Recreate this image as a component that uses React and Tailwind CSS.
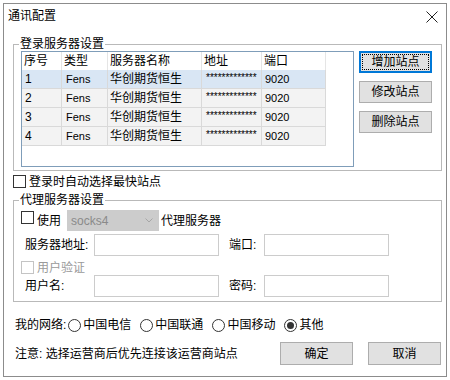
import { useState } from 'react'

const rows = [1, 2, 3, 4]

function Check({ disabled }) {
  return (
    <span
      className={`block w-[13px] h-[13px] border bg-white shrink-0 ${disabled ? 'border-[#c4c4c4]' : 'border-[#333333]'}`}
    />
  )
}

function Radio({ checked }) {
  return (
    <span className="flex items-center justify-center w-[13px] h-[13px] rounded-full border border-[#333333] bg-white shrink-0">
      {checked && <span className="block w-[7px] h-[7px] rounded-full bg-[#333333]" />}
    </span>
  )
}

function Btn({ children, focused }) {
  if (focused) {
    return (
      <div className="w-[73px] h-[22px] border-2 border-[#0078d7] bg-[#e1e1e1] p-[1px]">
        <div className="w-full h-full border border-dotted border-black flex items-center justify-center leading-[14px]">
          {children}
        </div>
      </div>
    )
  }
  return (
    <div className="w-[73px] h-[22px] border border-[#adadad] bg-[#e1e1e1] flex items-center justify-center leading-[14px]">
      {children}
    </div>
  )
}

function Field({ w = 'w-[125px]' }) {
  return <div className={`${w} h-[22px] border border-[#cccccc] bg-white`} />
}

export default function App() {
  const [net] = useState(3)
  const cols = ['w-[40px]', 'w-[46px]', 'w-[94px]', 'w-[60px]', 'w-[64px]']
  const nets = ['中国电信', '中国联通', '中国移动', '其他']

  return (
    <div className="w-[450px] h-[380px] bg-white pt-[3px] pl-[3px] text-[12px] text-black font-['Liberation_Sans','Noto_Sans_CJK_SC',sans-serif]">
      <div className="w-[444px] h-[374px] border border-[#8c8c8c] bg-white flex flex-col">
        {/* title */}
        <div className="h-[33px] flex items-start justify-between pl-[4px] pr-[8px] pt-[5px] shrink-0">
          <span className="leading-[14px]">通讯配置</span>
          <svg width="12" height="12" viewBox="0 0 12 12" className="mt-[2px]">
            <path d="M0.5 0.5 L11.5 11.5 M11.5 0.5 L0.5 11.5" stroke="#222" strokeWidth="1" fill="none" />
          </svg>
        </div>

        {/* login servers */}
        <fieldset className="ml-[9px] mr-[4px] border border-[#b9b9b9] px-[7px] pb-[3px] min-w-0">
          <legend className="ml-[-2px] px-[1px] leading-[14px]">登录服务器设置</legend>
          <div className="flex items-start">
            <div className="w-[333px] h-[116px] border border-[#7f9db9] bg-white">
              <div className="flex h-[18px]">
                {['序号', '类型', '服务器名称', '地址', '端口'].map((h, i) => (
                  <div key={h} className={`${cols[i]} h-full border-r border-[#e5e5e5] pl-[2px] leading-[18px]`}>
                    {h}
                  </div>
                ))}
              </div>
              {rows.map(n => (
                <div
                  key={n}
                  className={`flex w-[304px] h-[19px] border-b border-[#d9d9d9] ${n === 1 ? 'bg-[#d9e6f4]' : 'bg-[#f3f3f3]'}`}
                >
                  <div className={`${cols[0]} border-r border-[#d9d9d9] pl-[3px] leading-[19px]`}>{n}</div>
                  <div className={`${cols[1]} border-r border-[#d9d9d9] pl-[4px] leading-[19px] text-[11px]`}>Fens</div>
                  <div className={`${cols[2]} border-r border-[#d9d9d9] pl-[2px] leading-[19px]`}>华创期货恒生</div>
                  <div className={`${cols[3]} border-r border-[#d9d9d9] pl-[4px] leading-[15px] text-[10px]`}>*************</div>
                  <div className={`${cols[4]} border-r border-[#d9d9d9] pl-[3px] leading-[19px] text-[11px]`}>9020</div>
                </div>
              ))}
            </div>
            <div className="ml-[5px] flex flex-col gap-[8px]">
              <Btn focused>增加站点</Btn>
              <Btn>修改站点</Btn>
              <Btn>删除站点</Btn>
            </div>
          </div>
        </fieldset>

        <div className="ml-[9px] mt-[4px] flex items-center h-[13px] gap-[3px]">
          <Check />
          <span className="leading-[14px]">登录时自动选择最快站点</span>
        </div>

        {/* proxy */}
        <fieldset className="ml-[9px] mr-[4px] mt-[5px] border border-[#b9b9b9] px-[7px] pb-[4px] min-w-0">
          <legend className="ml-[-2px] px-[1px] leading-[14px]">代理服务器设置</legend>
          <div className="mt-[3px] h-[21px] flex items-center">
            <span className="mb-[6px]"><Check /></span>
            <span className="ml-[3px] leading-[14px]">使用</span>
            <div className="ml-[6px] w-[92px] h-[21px] bg-[#cccccc] flex items-center justify-between pl-[4px] pr-[6px]">
              <span className="text-[#8a8a8a] leading-[14px]">socks4</span>
              <svg width="8" height="5" viewBox="0 0 8 5">
                <path d="M0.5 0.5 L4 4 L7.5 0.5" stroke="#a6a6a6" strokeWidth="1" fill="none" />
              </svg>
            </div>
            <span className="ml-[2px] leading-[14px]">代理服务器</span>
          </div>
          <div className="mt-[3px] flex items-center">
            <span className="w-[73px] pl-[4px] leading-[14px]">服务器地址:</span>
            <Field />
            <span className="ml-[10px] w-[35px] leading-[14px]">端口:</span>
            <Field />
          </div>
          <div className="mt-[5px] h-[13px] flex items-center gap-[3px]">
            <Check disabled />
            <span className="text-[#9a9a9a] leading-[14px]">用户验证</span>
          </div>
          <div className="mt-[1px] flex items-center">
            <span className="w-[73px] pl-[4px] leading-[14px]">用户名:</span>
            <Field />
            <span className="ml-[10px] w-[35px] leading-[14px]">密码:</span>
            <Field />
          </div>
        </fieldset>

        {/* network */}
        <div className="ml-[11px] mt-[16px] h-[14px] flex items-center">
          <span className="leading-[14px]">我的网络:</span>
          {nets.map((t, i) => (
            <div key={t} className={`flex items-center gap-[2px] ${i === 0 ? 'ml-[2px]' : 'ml-[9px]'}`}>
              <Radio checked={i === net} />
              <span className="leading-[14px]">{t}</span>
            </div>
          ))}
        </div>

        <div className="ml-[11px] mr-[5px] mt-[10px] h-[23px] flex items-center">
          <span className="leading-[14px] flex-1">注意: 选择运营商后优先连接该运营商站点</span>
          <div className="w-[73px] h-[23px] border border-[#adadad] bg-[#e1e1e1] flex items-center justify-center leading-[14px]">确定</div>
          <div className="ml-[15px] w-[73px] h-[23px] border border-[#adadad] bg-[#e1e1e1] flex items-center justify-center leading-[14px]">取消</div>
        </div>
      </div>
    </div>
  )
}
